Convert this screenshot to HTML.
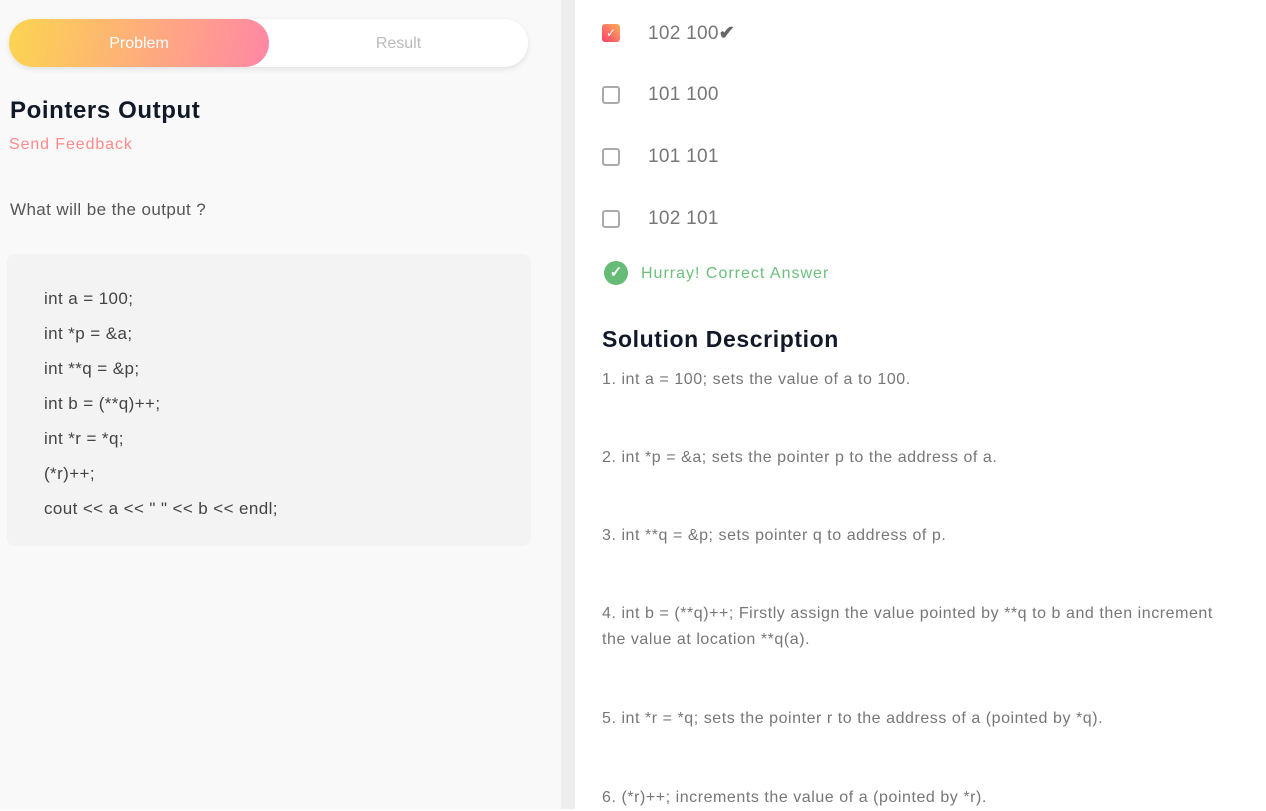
<!DOCTYPE html>
<html><head><style>
*{margin:0;padding:0;box-sizing:border-box}
body{width:1266px;height:809px;overflow:hidden;font-family:"Liberation Sans",sans-serif;background:#fff;position:relative}
.left{position:absolute;left:0;top:0;width:561px;height:809px;background:#f9f9f9}
.div{position:absolute;left:561px;top:0;width:14px;height:809px;background:#eeeeee}
.right{position:absolute;left:575px;top:0;width:691px;height:809px;background:#fff}
.tabs{position:absolute;left:9px;top:19px;width:519px;height:48px;border-radius:24px;background:#fff;box-shadow:0 2px 6px rgba(0,0,0,.1)}
.tab1{position:absolute;left:0;top:0;width:260px;height:48px;border-radius:24px;background:linear-gradient(100deg,#fbd550,#ff87a5);color:#fff;font-size:16px;line-height:50px;text-align:center}
.tab2{position:absolute;left:260px;top:0;width:259px;height:48px;line-height:50px;text-align:center;color:#bbb;font-size:16px}
h1{position:absolute;left:10px;top:97px;font-size:24px;color:#111827;font-weight:bold;letter-spacing:.6px}
.fb{position:absolute;left:9px;top:136px;color:#ff8a8a;font-size:16px;letter-spacing:.9px}
.q{position:absolute;left:10px;top:200px;color:#555;font-size:17px;letter-spacing:.4px}
.code{position:absolute;left:7px;top:254px;width:524px;height:292px;background:#f3f3f3;border-radius:8px}
.code div{position:absolute;left:37px;font-size:17px;color:#444;letter-spacing:.4px}
.opt{position:absolute;left:27px;font-size:19px;color:#777;letter-spacing:.3px}
.cb{position:absolute;left:27px;width:18px;height:18px;border:2px solid #aaa;border-radius:3px}
.sol p{position:absolute;left:27px;font-size:16px;color:#777;line-height:26px;width:615px;letter-spacing:.55px}
</style></head><body>
<div class="left">
<div class="tabs"><div class="tab1">Problem</div><div class="tab2">Result</div></div>
<h1>Pointers Output</h1>
<div class="fb">Send Feedback</div>
<div class="q">What will be the output ?</div>
<div class="code">
<div style="top:35px">int a = 100;</div>
<div style="top:70px">int *p = &amp;a;</div>
<div style="top:105px">int **q = &amp;p;</div>
<div style="top:140px">int b = (**q)++;</div>
<div style="top:175px">int *r = *q;</div>
<div style="top:210px">(*r)++;</div>
<div style="top:245px">cout &lt;&lt; a &lt;&lt; " " &lt;&lt; b &lt;&lt; endl;</div>
</div>
</div>
<div class="div"></div>
<div class="right">
<div style="position:absolute;left:27px;top:24px;width:18px;height:18px;border-radius:3px;background:linear-gradient(45deg,#ff3d6e,#fbb15a);color:#fff;font-size:12px;text-align:center;line-height:18px">✓</div>
<div class="opt" style="left:73px;top:22px">102 100<span style="color:#666;font-weight:bold">✔</span></div>
<div class="cb" style="top:86px"></div><div class="opt" style="left:73px;top:84px">101 100</div>
<div class="cb" style="top:148px"></div><div class="opt" style="left:73px;top:146px">101 101</div>
<div class="cb" style="top:210px"></div><div class="opt" style="left:73px;top:208px">102 101</div>
<div style="position:absolute;left:29px;top:261px;width:24px;height:24px;border-radius:50%;background:#66bb77;color:#fff;text-align:center;line-height:24px;font-size:15px;font-weight:bold">✓</div>
<div style="position:absolute;left:66px;top:265px;color:#6cc07c;font-size:16px;letter-spacing:1px">Hurray! Correct Answer</div>
<div style="position:absolute;left:27px;top:326px;font-size:23px;font-weight:bold;color:#111827;letter-spacing:.6px">Solution Description</div>
<div class="sol">
<p style="top:367px">1. int a = 100; sets the value of a to 100.</p>
<p style="top:445px">2. int *p = &amp;a; sets the pointer p to the address of a.</p>
<p style="top:523px">3. int **q = &amp;p; sets pointer q to address of p.</p>
<p style="top:601px">4. int b = (**q)++; Firstly assign the value pointed by **q to b and then increment<br>the value at location **q(a).</p>
<p style="top:706px">5. int *r = *q; sets the pointer r to the address of a (pointed by *q).</p>
<p style="top:785px">6. (*r)++; increments the value of a (pointed by *r).</p>
</div>
</div>
</body></html>
